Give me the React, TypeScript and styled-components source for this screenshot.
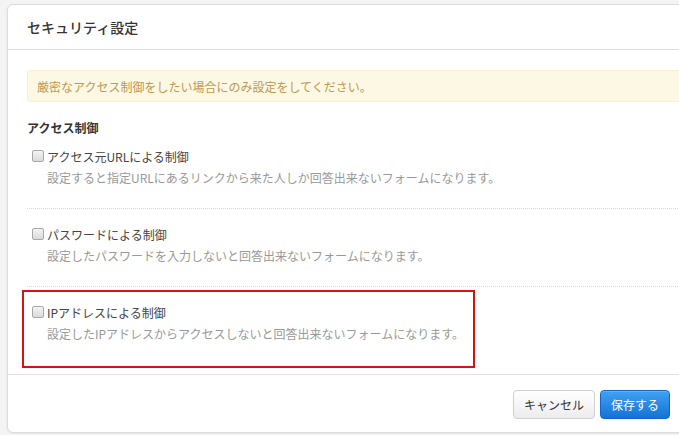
import React from "react";
import { createGlobalStyle, styled } from "styled-components";

const GlobalStyle = createGlobalStyle`
  html, body {
    margin: 0;
    padding: 0;
    background: #f4f4f4;
    overflow: hidden;
  }
  body {
    font-family: "Noto Sans CJK JP", "Noto Sans", sans-serif;
    font-size: 12px;
    color: #333;
  }
`;

const Page = styled.div`
  padding: 4px 0 0 7px;
  height: 435px;
  box-sizing: border-box;
`;

const Modal = styled.div`
  width: 700px;
  background: #fff;
  border: 1px solid #dcdcdc;
  border-radius: 6px;
  box-shadow: 0 1px 3px rgba(0, 0, 0, 0.06);
  overflow: hidden;
`;

const Header = styled.div`
  height: 44px;
  display: flex;
  align-items: center;
  padding: 0 19px;
  border-bottom: 1px solid #e0e0e0;
`;

const Title = styled.h3`
  margin: 0;
  font-size: 14px;
  font-weight: 500;
  line-height: 20px;
  color: #333;
`;

const Body = styled.div`
  padding: 20px 0 6px 19px;
`;

const Alert = styled.div`
  height: 30px;
  display: flex;
  align-items: center;
  padding: 0 9px;
  background: #fcf8e3;
  border: 1px solid #fbeed5;
  border-radius: 3px 0 0 3px;
  color: #c09853;
  font-size: 12px;
`;

const SectionTitle = styled.h4`
  margin: 17px 0 0;
  font-size: 12px;
  font-weight: 700;
  line-height: 18px;
  color: #333;
`;

const Option = styled.div<{ $divider?: boolean; $first?: boolean }>`
  padding: ${(p) => (p.$first ? "9px" : "15px")} 0 20px 5px;
  border-bottom: ${(p) => (p.$divider ? "1px dotted #d8d8d8" : "none")};
`;

const Highlight = styled.div`
  width: 446px;
  margin: 3px 0 0 -5px;
  padding: 10px 0 22px 3px;
  border: 2px solid #d41414;
  ${Option} {
    padding: 0 0 0 5px;
  }
`;

const CheckLabel = styled.label`
  display: flex;
  align-items: center;
  gap: 3px;
  height: 20px;
  font-size: 12px;
  color: #444;
  cursor: pointer;
`;

const Check = styled.input.attrs({ type: "checkbox" })`
  appearance: none;
  margin: 0;
  width: 12px;
  height: 12px;
  border: 1px solid #a8a8a8;
  border-radius: 2px;
  background: linear-gradient(#f4f4f4, #dadada);
  box-sizing: border-box;
  flex: none;
`;

const Description = styled.p`
  margin: 2px 0 0 15px;
  line-height: 20px;
  font-size: 12px;
  color: #999;
`;

const Footer = styled.div`
  display: flex;
  justify-content: flex-start;
  gap: 5px;
  padding: 15px 0 13px 505px;
  border-top: 1px solid #e3e3e3;
`;

const Button = styled.button<{ $primary?: boolean }>`
  height: 29px;
  padding: 0 10px;
  font-family: inherit;
  font-size: 12px;
  border-radius: 4px;
  cursor: pointer;
  color: ${(p) => (p.$primary ? "#fff" : "#333")};
  border: 1px solid ${(p) => (p.$primary ? "#1466c4" : "#cfcfcf")};
  background: ${(p) =>
    p.$primary
      ? "linear-gradient(#3fa2f2, #1473d6)"
      : "linear-gradient(#ffffff, #ececec)"};
  box-shadow: inset 0 1px 0 rgba(255, 255, 255, 0.2);
`;

type Rule = { label: string; description: string };

const rules: Rule[] = [
  {
    label: "アクセス元URLによる制御",
    description:
      "設定すると指定URLにあるリンクから来た人しか回答出来ないフォームになります。",
  },
  {
    label: "パスワードによる制御",
    description:
      "設定したパスワードを入力しないと回答出来ないフォームになります。",
  },
];

const ipRule: Rule = {
  label: "IPアドレスによる制御",
  description:
    "設定したIPアドレスからアクセスしないと回答出来ないフォームになります。",
};

const RuleOption = ({
  rule,
  divider,
  first,
}: {
  rule: Rule;
  divider?: boolean;
  first?: boolean;
}) => (
  <Option $divider={divider} $first={first}>
    <CheckLabel>
      <Check />
      {rule.label}
    </CheckLabel>
    <Description>{rule.description}</Description>
  </Option>
);

export default function App() {
  return (
    <>
      <GlobalStyle />
      <Page>
        <Modal>
          <Header>
            <Title>セキュリティ設定</Title>
          </Header>
          <Body>
            <Alert>厳密なアクセス制御をしたい場合にのみ設定をしてください。</Alert>
            <SectionTitle>アクセス制御</SectionTitle>
            {rules.map((rule, i) => (
              <RuleOption key={rule.label} rule={rule} divider first={i === 0} />
            ))}
            <Highlight>
              <RuleOption rule={ipRule} />
            </Highlight>
          </Body>
          <Footer>
            <Button>キャンセル</Button>
            <Button $primary>保存する</Button>
          </Footer>
        </Modal>
      </Page>
    </>
  );
}
